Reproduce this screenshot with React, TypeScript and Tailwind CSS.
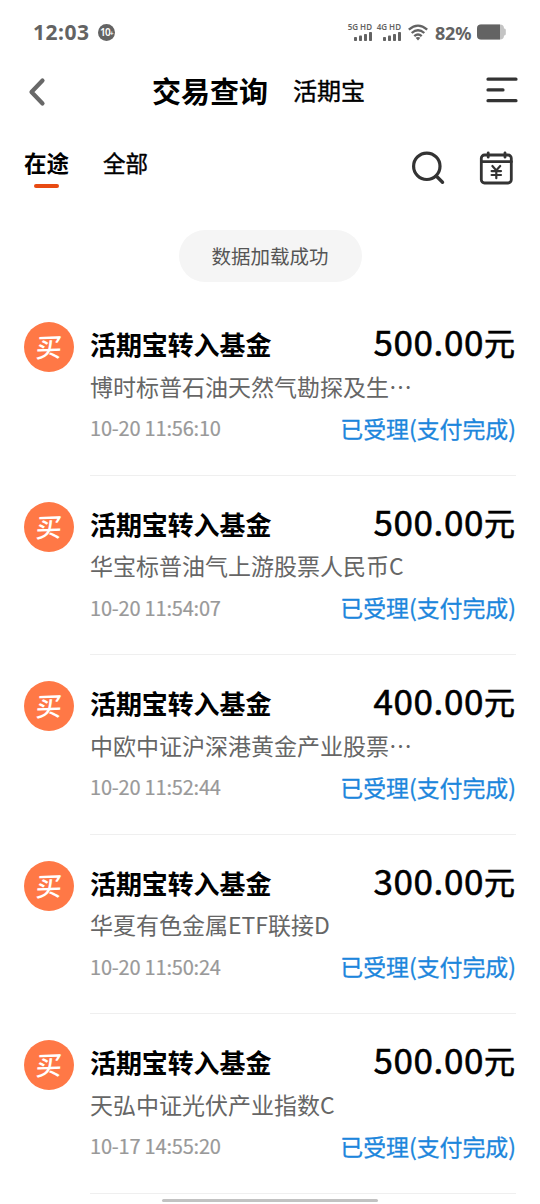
type Trade = {
  fund: string;
  time: string;
  amount: string;
};

const trades: Trade[] = [
  { fund: "博时标普石油天然气勘探及生⋯", time: "10-20 11:56:10", amount: "500.00" },
  { fund: "华宝标普油气上游股票人民币C", time: "10-20 11:54:07", amount: "500.00" },
  { fund: "中欧中证沪深港黄金产业股票⋯", time: "10-20 11:52:44", amount: "400.00" },
  { fund: "华夏有色金属ETF联接D", time: "10-20 11:50:24", amount: "300.00" },
  { fund: "天弘中证光伏产业指数C", time: "10-17 14:55:20", amount: "500.00" },
];

const Signal = ({ label }: { label: string }) => (
  <div className="flex w-[25px] flex-col items-end">
    <span className="text-[8px] font-semibold leading-[8px] whitespace-nowrap">{label}</span>
    <svg width="18" height="9" viewBox="0 0 18 9" fill="currentColor" className="mt-px">
      <rect x="0" y="5" width="3" height="4" rx="0.8" />
      <rect x="5" y="3.5" width="3" height="5.5" rx="0.8" />
      <rect x="10" y="2" width="3" height="7" rx="0.8" />
      <rect x="15" y="0" width="3" height="9" rx="0.8" />
    </svg>
  </div>
);

const StatusBar = () => (
  <div className="flex h-16 items-center justify-between pl-[33px] pr-[33px] text-[#636363]">
    <div className="flex items-center">
      <span className="w-[57px] font-['Noto_Sans'] text-[21px] font-bold leading-6 tracking-[0.5px] whitespace-nowrap">
        12:03
      </span>
      <span className="ml-2 flex size-[17px] items-center justify-center rounded-full bg-[#636363] font-['Noto_Sans'] text-[10px] font-semibold tracking-[-0.8px] text-white">
        10<span className="mt-1 text-[7px]">+</span>
      </span>
    </div>
    <div className="flex items-center font-['Noto_Sans']">
      <Signal label="5G HD" />
      <div className="ml-1">
        <Signal label="4G HD" />
      </div>
      <svg width="20" height="17" viewBox="0 0 20 17" fill="none" className="ml-[7px]">
        <g stroke="currentColor" strokeWidth="2.3">
          <path d="M0.8 5.6Q10 -2.4 19.2 5.6" />
          <path d="M3.7 9Q10 3.4 16.3 9" />
          <path d="M6.3 12.2Q10 8.8 13.7 12.2" />
        </g>
        <path d="M7.6 13.8Q10 12 12.4 13.8L10 16.6Z" fill="currentColor" />
      </svg>
      <span className="ml-[7px] mt-[2px] w-[37px] text-[18px] font-bold leading-6 tracking-[-0.2px] whitespace-nowrap">
        82%
      </span>
      <svg width="29" height="16" viewBox="0 0 29 16" className="ml-[5px] mr-px">
        <rect width="27" height="15" y="0.5" rx="4" fill="#c4c4c4" />
        <path d="M26.5 4.5h1a1.5 1.5 0 0 1 1.3 1.5v4a1.5 1.5 0 0 1-1.3 1.5h-1z" fill="#c4c4c4" />
        <path d="M4 .5h19v15H4a4 4 0 0 1-4-4v-7a4 4 0 0 1 4-4z" fill="#636363" />
      </svg>
    </div>
  </div>
);

const Header = () => (
  <div className="flex h-[52px] items-center pl-7 pr-[22px]">
    <svg width="18" height="30" viewBox="0 0 18 30" fill="none" className="mt-[3px]">
      <path
        d="M14.5 3.5L3.5 15l11 11.5"
        stroke="#686868"
        strokeWidth="4.2"
        strokeLinecap="round"
        strokeLinejoin="round"
      />
    </svg>
    <h1 className="ml-[106px] text-[29px] font-bold leading-10 whitespace-nowrap">交易查询</h1>
    <span className="ml-[25px] text-[24px] leading-10 whitespace-nowrap [-webkit-text-stroke:0.4px_black]">
      活期宝
    </span>
    <svg
      width="32"
      height="26"
      viewBox="0 0 32 26"
      stroke="#333"
      strokeWidth="3.2"
      strokeLinecap="round"
      className="ml-auto"
    >
      <path d="M2 2.2h28M2 12.9h15M2 23.7h28" />
    </svg>
  </div>
);

const Tabs = () => (
  <div className="flex h-[114px] items-start pl-6 pr-[27px]">
    <div className="mt-[30px] flex w-[45px] flex-col items-center">
      <span className="text-[22.5px] font-bold leading-8 whitespace-nowrap">在途</span>
      <span className="mt-[6px] h-1 w-[25px] rounded-full bg-[#e84a12]" />
    </div>
    <span className="ml-[34px] mt-[30px] text-[22.5px] leading-8 [-webkit-text-stroke:0.4px_black]">
      全部
    </span>
    <svg
      width="34"
      height="34"
      viewBox="0 0 34 34"
      fill="none"
      stroke="#333"
      strokeWidth="3.2"
      strokeLinecap="round"
      className="ml-auto mt-[35px]"
    >
      <circle cx="15.8" cy="15.3" r="13.2" />
      <path d="M25.5 25.3l6 6" strokeWidth="3.4" />
    </svg>
    <svg
      width="34"
      height="34"
      viewBox="0 0 34 34"
      fill="none"
      stroke="#333"
      strokeWidth="2.8"
      strokeLinecap="round"
      className="ml-[34px] mt-[35px]"
    >
      <rect x="2.3" y="4" width="30" height="28" rx="3.2" />
      <path d="M2.4 10.7h30M9.2 1.8v4.4M26 1.8v4.4" />
      <path d="M13.4 15l3.9 4.4L21.2 15M12.6 20.1H22M12.6 24H22M17.3 19.6v7.6" strokeWidth="2.2" />
    </svg>
  </div>
);

const TradeRow = ({ fund, time, amount }: Trade) => (
  <li className="flex h-[179.5px] pl-6 pr-6 pt-[26px]">
    <div className="flex size-[50px] shrink-0 items-center justify-center rounded-full bg-[#ff7846]">
      <span className="-mt-[2px] -skew-x-6 -rotate-2 text-[26px] font-medium leading-none text-white">
        买
      </span>
    </div>
    <div className="ml-4 grow border-b border-[#efefef]">
      <div className="flex h-[43px] items-center justify-between">
        <span className="text-[26px] font-bold tracking-[-0.1px]">活期宝转入基金</span>
        <span className="-mt-1 mr-px flex items-baseline text-[35px] tracking-[0.6px] [-webkit-text-stroke:0.6px_black]">
          {amount}
          <span className="relative -top-px text-[31px] tracking-normal">元</span>
        </span>
      </div>
      <div className="flex h-[42px] items-center text-[23px] text-[#666]">{fund}</div>
      <div className="flex h-[42px] items-center justify-between">
        <span className="text-[20px] tracking-[-0.2px] text-[#999] [-webkit-text-stroke:0.2px_#999]">
          {time}
        </span>
        <span className="text-[22.9px] text-[#1c86dc] [-webkit-text-stroke:0.3px_#1c86dc]">
          已受理(支付完成)
        </span>
      </div>
    </div>
  </li>
);

export default function App() {
  return (
    <div className="relative h-[1204px] w-[540px] overflow-hidden bg-white font-['Noto_Sans_CJK_SC',sans-serif] text-black">
      <StatusBar />
      <Header />
      <Tabs />
      <div className="mx-auto flex h-[52px] w-[183px] items-center justify-center rounded-full bg-[#f5f5f5] pb-px text-[19.5px] text-[#555]">
        数据加载成功
      </div>
      <ul className="mt-[14px]">
        {trades.map((trade) => (
          <TradeRow key={trade.time} {...trade} />
        ))}
      </ul>
      {/* home indicator */}
      <div className="absolute bottom-[2px] left-[162px] h-[3px] w-[216px] rounded-full bg-[#c2c2c2]" />
    </div>
  );
}
